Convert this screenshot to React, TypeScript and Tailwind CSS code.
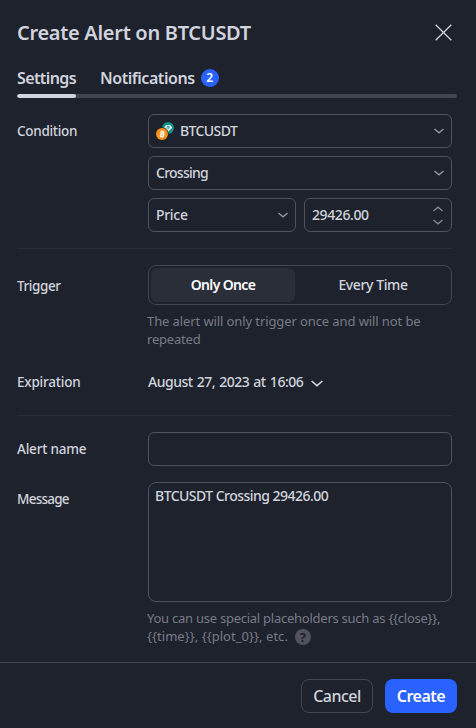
import React from "react";

function Chevron({ up = false, className = "" }: { up?: boolean; className?: string }) {
  return (
    <svg className={className} width="10" height="6" viewBox="0 0 10 6" fill="none" stroke="currentColor" strokeWidth="1.3">
      <path d={up ? "M0.5 5 5 1.2 9.5 5" : "M0.5 1 5 4.8 9.5 1"} />
    </svg>
  );
}

function Label({ children, className = "" }: { children: React.ReactNode; className?: string }) {
  return <div className={`w-[131px] shrink-0 text-[13.5px] leading-[18px] ${className}`}>{children}</div>;
}

function PairIcon() {
  return (
    <svg width="18" height="18" viewBox="0 0 18 18" className="mr-[6px] shrink-0">
      <circle cx="12" cy="6" r="6" fill="#0f9189" />
      <path d="M9.8 3.2h4.8L16.2 5.8 12.2 9.6 8.2 5.8Z" fill="#fff" />
      <path d="M10.6 4.5h3.2M12.2 4.5v3M10 5.9h4.4" stroke="#0f9189" strokeWidth=".7" />
      <circle cx="6" cy="12" r="6.7" fill="#1e222d" />
      <circle cx="6" cy="12" r="6" fill="#f7931a" />
      <g transform="rotate(12 6 12)" fill="none" stroke="#fff" strokeWidth="1.2">
        <path d="M4 9.9h2.6a1 1 0 0 1 0 2.1H5h1.9a1.1 1.1 0 0 1 0 2.2H4M5 9.5v5" />
        <path d="M5.4 8.4v1.2M7 8.4v1.2M5.4 14.5v1.2M7 14.5v1.2" strokeWidth=".8" />
      </g>
    </svg>
  );
}

const box = "flex h-[34px] items-center rounded-[6px] border border-[#50535e] pl-[7px]";

export default function App() {
  return (
    <div className="flex h-[728px] w-[476px] flex-col bg-[#1e222d] font-['Noto_Sans',sans-serif] text-[14px] font-medium leading-[18px] text-[#d1d4dc]">
      <header className="flex h-[66px] items-center justify-between pl-[17px] pr-[24px]">
        <h1 className="whitespace-nowrap text-[20px] font-semibold leading-[28px] tracking-[-0.3px]">Create Alert on BTCUSDT</h1>
        <svg width="17" height="17" viewBox="0 0 17 17" stroke="currentColor" strokeWidth="1.3" className="-mt-px">
          <path d="M.7.7l15.6 15.6M16.3.7.7 16.3" />
        </svg>
      </header>
      <nav className="mx-[17px] mr-[19px] flex h-[28px] text-[16px] font-semibold leading-[24px]">
        <span className="w-[83px] tracking-[-0.6px]">Settings</span>
        <span className="tracking-[-0.45px]">Notifications</span>
        <span className="ml-[6px] mt-[3px] flex size-[18px] items-center justify-center rounded-full bg-[#2962ff] text-[12px] leading-[18px] text-white">2</span>
      </nav>
      <div className="ml-[17px] h-[4px] w-[440px] overflow-hidden rounded-[2px] bg-[#434651]">
        <div className="h-[4px] w-[59px] rounded-[2px] bg-[#d1d4dc]" />
      </div>

      <main className="ml-[17px] mr-[24px]">
        <section className="flex h-[151px] border-b border-[#2a2e39] pt-[16px]">
          <Label className="pt-[8px] tracking-[-0.3px]">Condition</Label>
          <div className="flex w-[304px] flex-col gap-[8px]">
            <div className={box}>
              <PairIcon />
              <span className="tracking-[-0.6px]">BTCUSDT</span>
              <Chevron className="ml-auto mr-[7px] text-[#9598a1]" />
            </div>
            <div className={box}>
              <span className="tracking-[-0.75px]">Crossing</span>
              <Chevron className="ml-auto mr-[7px] text-[#9598a1]" />
            </div>
            <div className="flex gap-[8px]">
              <div className={`w-[148px] ${box}`}>
                <span className="tracking-[-0.3px]">Price</span>
                <Chevron className="ml-auto mr-[7px] text-[#9598a1]" />
              </div>
              <div className={`w-[148px] ${box}`}>
                <span className="tracking-[-0.4px]">29426.00</span>
                <div className="ml-auto mr-[8px] flex flex-col gap-[7px] text-[#868993]">
                  <Chevron up />
                  <Chevron />
                </div>
              </div>
            </div>
          </div>
        </section>

        <section className="h-[167px] border-b border-[#2a2e39] pt-[16px]">
          <div className="flex">
            <Label className="pt-[12px] tracking-[-0.4px]">Trigger</Label>
            <div>
              <div className="flex h-[40px] w-[304px] rounded-[8px] border border-[#434651] p-[2px]">
                <div className="flex w-[144px] items-center justify-center rounded-[6px] bg-[#2a2e39] font-semibold text-white"><span className="tracking-[-0.65px]">Only Once</span></div>
                <div className="flex flex-1 items-center justify-center pl-[2px]"><span className="tracking-[-0.4px]">Every Time</span></div>
              </div>
              <p className="-ml-px mb-px mt-[7px] whitespace-nowrap text-[13px] font-normal text-[#787b86]">
                <span className="block tracking-[-0.1px]">The alert will only trigger once and will not be</span>
                <span className="block tracking-[-0.2px]">repeated</span>
              </p>
            </div>
          </div>
          <div className="mt-[24px] flex">
            <Label className="tracking-[-0.2px]">Expiration</Label>
            <span className="tracking-[-0.5px] [word-spacing:1px]">August 27, 2023 at 16:06</span>
            <svg width="12" height="7" viewBox="0 0 12 7" fill="none" stroke="currentColor" strokeWidth="1.6" className="ml-[8px] mt-[7px]">
              <path d="M.6 1 6 5.6 11.4 1" />
            </svg>
          </div>
        </section>

        <section className="pt-[16px]">
          <div className="flex">
            <Label className="pt-[8px] tracking-[-0.2px]">Alert name</Label>
            <div className="h-[34px] w-[304px] rounded-[6px] border border-[#50535e]" />
          </div>
          <div className="mt-[16px] flex">
            <Label className="pt-[8px] tracking-[-0.75px]">Message</Label>
            <div>
              <div className="h-[120px] w-[304px] rounded-[8px] border border-[#50535e] pl-[6px] pt-[4px]">
                <span className="tracking-[-0.53px]">BTCUSDT Crossing 29426.00</span>
              </div>
              <p className="-ml-px mt-[7px] whitespace-nowrap text-[13px] font-normal text-[#787b86]">
                <span className="block tracking-[-0.25px]">You can use special placeholders such as {"{{close}}"},</span>
                <span className="flex items-start">
                  <span className="tracking-[0.05px]">{"{{time}}, {{plot_0}}, etc."}</span>
                  <span className="ml-[7px] mt-[2px] flex size-[16px] items-center justify-center rounded-full bg-[#50535e] text-[13px] font-bold leading-[16px] text-[#1e222d]">?</span>
                </span>
              </p>
            </div>
          </div>
        </section>
      </main>

      <footer className="mt-auto flex h-[66px] gap-[12px] border-t border-[#434651] pl-[301px] pt-[16px] text-[16px]">
        <button className="h-[34px] w-[72px] rounded-[8px] border border-[#434651]"><span className="tracking-[-0.5px]">Cancel</span></button>
        <button className="h-[34px] w-[72px] rounded-[8px] bg-[#2962ff] font-semibold text-white"><span className="tracking-[-0.5px]">Create</span></button>
      </footer>
    </div>
  );
}
